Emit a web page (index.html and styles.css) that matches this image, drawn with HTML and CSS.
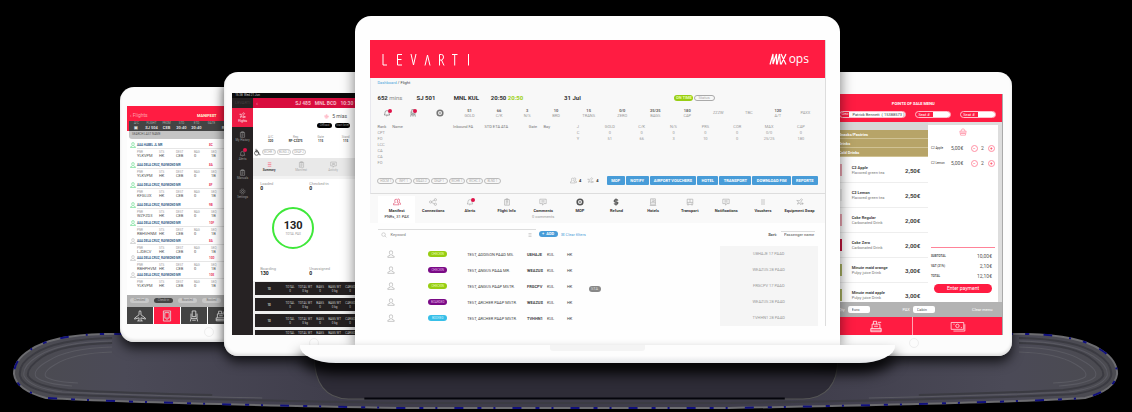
FILE: index.html
```html
<!DOCTYPE html>
<html lang="en">
<head>
<meta charset="utf-8">
<title>Levarti MAX ops</title>
<link rel="stylesheet" href="styles.css">
</head>
<body>
<svg class="sprite" aria-hidden="true">
  <symbol id="person" viewBox="0 0 10 10"><path d="M5 1a2 2 0 0 1 2 2.400Q6.800 5 6 5.500v1L9 8v1.200H1V8l3-1.500v-1Q3.200 5 3 3.400A2 2 0 0 1 5 1z"/></symbol>
  <symbol id="people" viewBox="0 0 10 10"><path d="M4 1.500a1.800 1.800 0 0 1 1.700 2.200Q5.500 5 5 5.500L7.500 7v1.500H.5V7L3 5.500Q2.300 5 2.200 3.700A1.800 1.800 0 0 1 4 1.500zM6 1.200q2-.5 2.200 1.500Q8.200 4.500 7.300 5L9.500 6.500v2"/></symbol>
  <symbol id="share" viewBox="0 0 10 10"><circle cx="2" cy="5" r="1.400"/><circle cx="8" cy="2.200" r="1.400"/><circle cx="8" cy="7.800" r="1.400"/><path d="M3.300 4.400L6.700 2.800M3.300 5.600l3.400 1.600"/></symbol>
  <symbol id="bell" viewBox="0 0 10 10"><path d="M1.500 7.500Q2.500 6.500 2.500 4.500a2.500 2.500 0 0 1 5 0q0 2 1 3zM4 8q1 2 2 0"/></symbol>
  <symbol id="clip" viewBox="0 0 10 10"><path d="M2 2h6v7H2zM3.700 1h2.600v1.700H3.700zM3.500 4.500h3M3.500 6h3M3.500 7.500h2"/></symbol>
  <symbol id="chat" viewBox="0 0 10 10"><path d="M1 1.500h8V7H6L4.500 9V7H1zM3 3.500h4M3 5h4"/></symbol>
  <symbol id="ring" viewBox="0 0 10 10"><circle cx="5" cy="5" r="3.500" stroke-width="2"/><path d="M3.500 5h3M5 3.500v3"/></symbol>
  <symbol id="dollar" viewBox="0 0 10 10"><path d="M7.500 3Q7 2 5 2T2.700 3.500 5 5t2.300 1.500T5 8 2.500 7M5 .5v9" stroke-width="1.400"/></symbol>
  <symbol id="bus" viewBox="0 0 10 10"><path d="M1.500 1.500h7v6.500h-7zM1.500 5.500h7M5 1.500v4M2.500 8v1.500M7.500 8v1.500M3 6.800h.5M6.500 6.800H7"/></symbol>
  <symbol id="hotel" viewBox="0 0 10 10"><path d="M2 1h6v7.500H2zM2 6h6M3.500 2.500h3v2h-3M1 9.500h8"/></symbol>
  <symbol id="list" viewBox="0 0 10 10"><path d="M2.500 2.500h5M2.500 5h5M2.500 7.500h5"/></symbol>
  <symbol id="plane" viewBox="0 0 10 10"><path d="M5 .5q.8 0 .8 1.500v2L9.500 6.800v.8L5.800 6.500v1.700l1.200.9H3l1.200-.9V6.500L.5 7.600v-.8L4.200 4V2Q4.200.5 5 .5z"/></symbol>
  <symbol id="swap" viewBox="0 0 10 10"><path d="M1 3l3 .5L7 1l1 1-2 3 .5 3L5.500 8 4 6 2.500 8 1.500 7 3.500 5.500zM7 7h2.500M8.200 5.800v2.500"/></symbol>
  <symbol id="search" viewBox="0 0 10 10"><circle cx="4.300" cy="4.300" r="3"/><path d="M6.500 6.500L9 9"/></symbol>
  <symbol id="gear" viewBox="0 0 10 10"><circle cx="5" cy="5" r="1.500"/><circle cx="5" cy="5" r="3.500" stroke-dasharray="2 .7"/></symbol>
  <symbol id="device" viewBox="0 0 10 10"><path d="M2 .8h6v8.400H2zM3.200 2.200h3.600v4.600H3.200zM4.500 8h1"/></symbol>
  <symbol id="seat" viewBox="0 0 10 10"><path d="M3.500.8h3v4.700h-3zM2.500 3v4h5V3M2.500 7L2 9.500M7.500 7L8 9.500M3.500 8.500h3"/></symbol>
  <symbol id="till" viewBox="0 0 10 10"><path d="M1 6.500h8V9H1zM2 6.500V3.200h6v3.300M3 3.200V1h2.500v2.200M6.500 1.800H9M3.500 4.800h3M1 7.800h8"/></symbol>
  <symbol id="cash" viewBox="0 0 14 10"><path d="M1 1.500h11v6H1zM3 9h10V3M3 3h1M9.500 6h1"/><circle cx="6.500" cy="4.500" r="1.500"/></symbol>
  <symbol id="wheel" viewBox="0 0 10 10"><circle cx="4.500" cy="6.500" r="2.600"/><path d="M3.800 1v4h3L8 8.500h1.500M3.800 3h2.500"/></symbol>
  <symbol id="basket" viewBox="0 0 10 10"><path d="M1 4h8L8 9H2zM2.500 4Q3 1 5 1t2.500 3M3.500 5.500v2M5 5.500v2M6.500 5.500v2M1.500 6.500h7"/></symbol>
</svg>

<main class="scene">
  <svg class="floor" viewBox="0 0 1106 78" preserveAspectRatio="none" aria-hidden="true">
    <defs>
      <linearGradient id="haze" x1="0" x2="1" y1="0" y2="0"><stop offset="0" stop-color="#4b4b50"/><stop offset=".1" stop-color="#4b4a57"/><stop offset=".3" stop-color="#3f3d4b"/><stop offset=".7" stop-color="#3f3d4b"/><stop offset=".9" stop-color="#4b4a57"/><stop offset="1" stop-color="#4b4b50"/></linearGradient>
      <path id="pool" d="M92 2Q40 3 18 18Q2 28 2 42Q4 58 34 66Q120 71 390 76H716Q990 71 1072 66Q1102 58 1104 42Q1104 28 1088 18Q1066 3 1014 2Z"/>
    </defs>
    <use href="#pool" fill="url(#haze)" stroke="#6c6c70" stroke-width="2"/>
    <use href="#pool" fill="none" stroke="#10107c" stroke-width="2" stroke-dasharray="4 12 2 17 9 14"/>
    <g fill="none" stroke="#3b3b42" stroke-width="2">
      <path d="M100 6Q44 7 22 22Q6 32 8 44Q12 57 44 62Q140 67 390 71H716Q966 67 1062 62Q1094 57 1098 44Q1100 32 1084 22Q1062 7 1006 6"/>
      <path d="M100 11Q50 12 30 25Q14 36 16 44Q22 54 56 58Q110 61 200 63M906 63Q996 61 1050 58Q1084 54 1090 44Q1092 36 1076 25Q1056 12 1006 11"/>
    </g>
    <g fill="none" stroke="#5a5a62" stroke-width="1">
      <path d="M100 9Q48 10 26 24Q10 34 12 44Q18 56 50 60Q110 63 250 66M856 66Q996 63 1056 60Q1088 56 1094 44Q1096 34 1080 24Q1058 10 1006 9"/>
      <path d="M100 15Q56 16 36 29Q20 38 24 45Q32 52 60 54M1006 15Q1050 16 1070 29Q1086 38 1082 45Q1074 52 1046 54"/>
      <path d="M100 20Q62 21 44 32Q30 40 34 45Q42 50 66 51M1006 20Q1044 21 1062 32Q1076 40 1072 45Q1064 50 1040 51"/>
    </g>
    <path d="M302 24H825Q826 66 790 67H336Q302 66 302 24Z" fill="#2e2c37"/>
    <path d="M352 66.500H772" stroke="#05050c" stroke-width="2"/>
  </svg>

  <section class="tablet manifest">
    <div class="screen">
      <header class="mf-bar"><a href="#">‹ Flights</a><b>MANIFEST</b></header>
      <dl class="mf-flight">
        <div><dt>A/C</dt><dd>▣</dd></div><div><dt>FLIGHT</dt><dd>SJ 504</dd></div><div><dt>FROM</dt><dd>CEB</dd></div><div><dt>STD</dt><dd>20:40</dd></div><div><dt>ETD</dt><dd>20:40</dd></div><div><dt>GATE</dt><dd></dd></div><div><dt>REG</dt><dd>RP-C</dd></div>
      </dl>
      <div class="mf-find">SEARCH LAST NAME</div>
      <ul class="mf-list">
        <li><svg class="ic go"><use href="#person"/></svg><b>AAA HABEL JL MR</b><em>8C</em><dl><div><dt>PNR</dt><dd>YLKVPM</dd></div><div><dt>STS</dt><dd>HK</dd></div><div><dt>DEST</dt><dd>CEB</dd></div><div><dt>BAG</dt><dd>0</dd></div><div><dt>SEQ</dt><dd>1B</dd></div></dl></li>
        <li><svg class="ic go"><use href="#person"/></svg><b>AAA DELA CRUZ, RAYMOND MR</b><em>8A</em><dl><div><dt>PNR</dt><dd>YLKVPM</dd></div><div><dt>STS</dt><dd>HK</dd></div><div><dt>DEST</dt><dd>CEB</dd></div><div><dt>BAG</dt><dd>0</dd></div><div><dt>SEQ</dt><dd>1B</dd></div></dl></li>
        <li><svg class="ic go"><use href="#person"/></svg><b>AAA DELA CRUZ, RAYMOND MR</b><em>8F</em><dl><div><dt>PNR</dt><dd>KFGLUX</dd></div><div><dt>STS</dt><dd>HK</dd></div><div><dt>DEST</dt><dd>CEB</dd></div><div><dt>BAG</dt><dd>0</dd></div><div><dt>SEQ</dt><dd>1B</dd></div></dl></li>
        <li><svg class="ic go"><use href="#person"/></svg><b>AAA DELA CRUZ, RAYMOND MR</b><em>9B</em><dl><div><dt>PNR</dt><dd>WZFZD3</dd></div><div><dt>STS</dt><dd>HK</dd></div><div><dt>DEST</dt><dd>CEB</dd></div><div><dt>BAG</dt><dd>0</dd></div><div><dt>SEQ</dt><dd>1B</dd></div></dl></li>
        <li><svg class="ic go"><use href="#person"/></svg><b>AAA DELA CRUZ, RAYMOND MR</b><em>10F</em><dl><div><dt>PNR</dt><dd>RBHVHNM</dd></div><div><dt>STS</dt><dd>HK</dd></div><div><dt>DEST</dt><dd>CEB</dd></div><div><dt>BAG</dt><dd>0</dd></div><div><dt>SEQ</dt><dd>1B</dd></div></dl></li>
        <li><svg class="ic"><use href="#person"/></svg><b>AAA DELA CRUZ, RAYMOND MR</b><em>8A</em><dl><div><dt>PNR</dt><dd>LJDECV</dd></div><div><dt>STS</dt><dd>HK</dd></div><div><dt>DEST</dt><dd>CEB</dd></div><div><dt>BAG</dt><dd>0</dd></div><div><dt>SEQ</dt><dd>1B</dd></div></dl></li>
        <li><svg class="ic"><use href="#person"/></svg><b>AAA DELA CRUZ, RAYMOND MR</b><em>10D</em><dl><div><dt>PNR</dt><dd>RBHPHVM</dd></div><div><dt>STS</dt><dd>HK</dd></div><div><dt>DEST</dt><dd>CEB</dd></div><div><dt>BAG</dt><dd>0</dd></div><div><dt>SEQ</dt><dd>1B</dd></div></dl></li>
        <li><svg class="ic"><use href="#person"/></svg><b>AAA DELA CRUZ, RAYMOND MR</b><em>10E</em><dl><div><dt>PNR</dt><dd>YLKVPM</dd></div><div><dt>STS</dt><dd>HK</dd></div><div><dt>DEST</dt><dd>CEB</dd></div><div><dt>BAG</dt><dd>0</dd></div><div><dt>SEQ</dt><dd>1B</dd></div></dl></li>
      </ul>
      <div class="mf-pills"><button>Checked</button><button class="on">Check-in</button><button>Boarded</button><button>Booked</button></div>
      <nav class="mf-nav"><button aria-label="Flights"><svg><use href="#plane"/></svg></button><button class="on" aria-label="Manifest"><svg><use href="#device"/></svg></button><button aria-label="Seats"><svg><use href="#seat"/></svg></button><button aria-label="Sales"><svg><use href="#till"/></svg></button></nav>
    </div>
    <i class="home"></i>
  </section>

  <section class="tablet flight">
    <div class="screen">
      <div class="status">15:38 &nbsp;Wed 21 Jun</div>
      <div class="fl-body">
        <nav class="fl-side">
          <span class="fl-logo">LEVARTI</span>
          <a href="#" class="on"><svg class="ic"><use href="#swap"/></svg>Flights</a>
          <a href="#"><svg class="ic"><use href="#clip"/></svg>My History</a>
          <a href="#" class="dot"><svg class="ic"><use href="#bell"/></svg>Alerts</a>
          <a href="#"><svg class="ic"><use href="#clip"/></svg>Manuals</a>
          <a href="#"><svg class="ic"><use href="#gear"/></svg>Settings</a>
        </nav>
        <div class="fl-main">
          <header class="fl-bar"><span>‹</span><b>SJ 485</b><b>MNL BCD</b><b>10:30 17:00</b></header>
          <div class="fl-time"><p><svg class="ic"><use href="#gear"/></svg>5 mias</p><p><button>Offload</button><button>Start brief</button></p></div>
          <dl class="fl-facts"><div><dt>A/C</dt><dd>320</dd></div><div><dt>Reg</dt><dd>RP-C3275</dd></div><div><dt>Gate</dt><dd>115</dd></div><div><dt>Stand</dt><dd>115</dd></div></dl>
          <div class="fl-tags"><svg class="ic"><use href="#wheel"/></svg><span>WCHR 1</span><span>BLND 2</span><span>DEAF 2</span></div>
          <div class="fl-tabs"><a href="#" class="on"><svg class="ic"><use href="#list"/></svg>Summary</a><a href="#"><svg class="ic"><use href="#clip"/></svg>Manifest</a><a href="#"><svg class="ic"><use href="#chat"/></svg>Activity</a></div>
          <div class="fl-cards">
            <div class="fl-count">
              <div class="pair"><p>Loaded<b>0</b></p><p>Checked-in<b>0</b></p></div>
              <div class="dial"><b>130</b><small>TOTAL PAX</small></div>
              <div class="pair"><p>Boarding<b>130</b></p><p>Unassigned<b>0</b></p></div>
            </div>
            <div class="fl-detail"><p>Flight details</p><ul><li>130 / 1</li><li>0 / 0 kg</li><li>0 / 0 kg</li><li>0 / 0 kg</li><li>0 / 0 kg</li><li>0 / 0 kg</li></ul><p>Guests</p><ul><li>3 <i>adults</i></li><li>0 <i>infants</i></li></ul></div>
          </div>
          <div class="fl-holds">
            <p><b>10</b><span>TOTAL<br>0</span><span>TOTAL WT<br>0 kg</span><span>BAGS<br>0</span><span>BAGS WT<br>0 kg</span><span>CARGO<br>0</span></p>
            <p><b>10</b><span>TOTAL<br>0</span><span>TOTAL WT<br>0 kg</span><span>BAGS<br>0</span><span>BAGS WT<br>0 kg</span><span>CARGO<br>0</span></p>
            <p><b>10</b><span>TOTAL<br>0</span><span>TOTAL WT<br>0 kg</span><span>BAGS<br>0</span><span>BAGS WT<br>0 kg</span><span>CARGO<br>0</span></p>
            <p class="cut"><b></b><span>TOTAL</span><span>TOTAL WT</span><span>BAGS</span><span>BAGS WT</span><span>CARGO</span></p>
          </div>
        </div>
      </div>
    </div>
    <i class="home"></i>
  </section>

  <section class="tablet sales">
    <div class="screen">
      <header class="ps-bar"><h2>POINTS OF SALE MENU</h2>
        <div class="ps-fields"><label class="wide">Crew<input value="Patrick Bennett  ( 15388573 )"></label><label>Seat #<input></label><label>Seat #<input></label></div></header>
      <div class="ps-body">
        <div class="ps-menu">
          <button class="cat">Snacks/Pastries</button><button class="cat">Drinks</button><button class="cat">Cold Drinks</button>
          <ul>
            <li><i></i><p><b>C2 Apple</b>Flavored green tea</p><strong>2,50€</strong></li>
            <li><i class="pale"></i><p><b>C2 Lemon</b>Flavored green tea</p><strong>2,50€</strong></li>
            <li><i></i><p><b>Coke Regular</b>Carbonated Drink</p><strong>2,00€</strong></li>
            <li><i class="red"></i><p><b>Coke Zero</b>Carbonated Drink</p><strong>2,00€</strong></li>
            <li><i class="olive"></i><p><b>Minute maid orange</b>Pulpy juice Drink</p><strong>3,00€</strong></li>
            <li><i class="olive"></i><p><b>Minute maid apple</b>Pulpy juice Drink</p><strong>3,00€</strong></li>
          </ul>
        </div>
        <aside class="ps-cart">
          <svg class="ic"><use href="#basket"/></svg>
          <p class="line"><small>C2 Apple</small><span>5,00€</span><button>−</button><span>2</span><button>+</button></p>
          <p class="line"><small>C2 Lemon</small><span>5,00€</span><button>−</button><span>2</span><button>+</button></p>
          <dl><div><dt>SUBTOTAL</dt><dd>10,00€</dd></div><div><dt>VAT (21%)</dt><dd>2,10€</dd></div><div><dt>TOTAL</dt><dd>12,10€</dd></div></dl>
          <button class="pay">Enter payment</button>
        </aside>
      </div>
      <div class="ps-tools"><label>Qty<input value="Euro"></label><label>PAX<input value="Cabin"></label><span>Clear menu</span></div>
      <nav class="ps-nav"><button aria-label="Register"><svg><use href="#till"/></svg></button><button aria-label="Payments"><svg><use href="#cash"/></svg></button></nav>
    </div>
    <i class="home"></i>
  </section>

  <section class="laptop">
    <div class="display">
      <header class="brand">
        <svg class="levarti" viewBox="0 0 88 12" role="img" aria-label="LEVARTI"><g fill="none" stroke="#fff"><path d="M1 0v11h4M20 .5h-4.500v10.500H20M15.500 5.500h4M29 0l2.500 11L34 0M43 11.500L45.500 1 48 11.500M57.500 11.500V.5h2q2 0 2 2.500t-2 3h-2M59.500 6l2.500 5.500M70 .5h5.500M72.700.5v11M86.500 0v11.500"/></g></svg>
        <div class="max"><svg viewBox="0 0 18 12" aria-label="MAX" role="img"><path d="M1 11.500L4 1v10L7.500 1v10.500M8 11.500L10.500 1l1 10.500M12 1l5 10.500M17 1l-5 10.500" fill="none" stroke="#fff" stroke-width="1.200"/></svg><span>ops</span></div>
      </header>
      <div class="top">
        <p class="crumb"><a href="#">Dashboard</a> / Flight</p>
        <div class="facts"><p>652 <i>mins</i></p><p>SJ 501</p><p>MNL KUL</p><p>20:50 <em>20:50</em></p><p>31 Jul</p><p class="states"><button>ON TIME</button><select aria-label="Status"><option>Status</option></select></p></div>
        <div class="stats">
          <span class="bell"><svg class="ic"><use href="#bell"/></svg></span><span class="bell"><svg class="ic"><use href="#seat"/></svg></span><span><svg class="ic"><use href="#ring"/></svg></span>
          <p><b>51</b>GOLD</p><p><b>66</b>C/K</p><p><b>3</b>N/S</p><p><b>10</b>BRD</p><p><b>15</b>TRANS</p><p><b>0/0</b>ZERO</p><p><b>25/25</b>BAGS</p><p><b>180</b>CAP</p><p>ZZZW</p><p>TBC</p><p><b>120</b>A/T</p><p>PAXX</p>
        </div>
        <div class="grids">
          <table class="crew"><tr><th>Rank</th><th>Name</th><th>Inbound FA</th><th>STD ETA ATA</th><th>Gate</th><th>Bay</th></tr><tr><td>CPT</td></tr><tr><td>FO</td></tr><tr><td>LCC</td></tr><tr><td>CA</td></tr><tr><td>CA</td></tr><tr><td>FO</td></tr></table>
          <table class="load"><tr><th>J</th><th>GOLD</th><th>C/K</th><th>N/S</th><th>PRS</th><th>COR</th><th>MAX</th><th>CAP</th></tr><tr><td>C</td><td>0</td><td>0</td><td>0</td><td>0</td><td>0</td><td>0/0</td><td>0</td></tr><tr><td>Y</td><td>51</td><td>66</td><td>3</td><td>10</td><td>0</td><td>25/25</td><td>180</td></tr></table>
        </div>
        <div class="actions">
          <div class="chips"><span>HDCM 1</span><span>INFT 1</span><span>MAAS 2</span><span>DEAF 1</span><span>WCHR 1</span><span>WCHC 3</span><span>BLND 1</span></div>
          <div class="cnt"><span><svg class="ic"><use href="#people"/></svg>4</span><span><svg class="ic"><use href="#swap"/></svg>4</span></div>
          <div class="blue"><button>MOP</button><button>NOTIFY</button><button>AIRPORT VOUCHERS</button><button>HOTEL</button><button>TRANSPORT</button><button>DOWNLOAD FIM</button><button>REPORTS</button></div>
        </div>
      </div>
      <nav class="tabs">
        <a href="#" class="on"><svg class="ic"><use href="#people"/></svg>Manifest<small>PNRs, 31 PAX</small></a><a href="#"><svg class="ic"><use href="#share"/></svg>Connections</a><a href="#" class="bell"><svg class="ic"><use href="#bell"/></svg>Alerts</a><a href="#"><svg class="ic"><use href="#clip"/></svg>Flight Info</a><a href="#"><svg class="ic"><use href="#chat"/></svg>Comments<small class="dim">0 comments</small></a><a href="#"><svg class="ic dark"><use href="#ring"/></svg>MOP</a><a href="#"><svg class="ic dark"><use href="#dollar"/></svg>Refund</a><a href="#"><svg class="ic"><use href="#hotel"/></svg>Hotels</a><a href="#"><svg class="ic"><use href="#bus"/></svg>Transport</a><a href="#"><svg class="ic"><use href="#chat"/></svg>Notifications</a><a href="#"><svg class="ic"><use href="#list"/></svg>Vouchers</a><a href="#"><svg class="ic"><use href="#swap"/></svg>Equipment Swap</a>
      </nav>
      <div class="filter">
        <label class="find"><svg class="ic"><use href="#search"/></svg><input placeholder="Keyword" aria-label="Keyword"><svg class="ic"><use href="#list"/></svg></label>
        <button>+ &nbsp;ADD</button><a href="#">☒ Clear filters</a>
        <label class="sort">Sort: <select><option>Passenger name</option></select></label>
      </div>
      <div class="rows">
        <table class="pax">
          <tr><td><svg class="ic"><use href="#person"/></svg></td><td><mark>CHECKIN</mark></td><td>TEST, ADDISON PAAD MS.</td><td><b>U8HAJE</b></td><td>KUL</td><td>HK</td></tr>
          <tr><td><svg class="ic"><use href="#person"/></svg></td><td><mark class="purple">CHECKIN</mark></td><td>TEST, ANGUS PAAA MR.</td><td><b>WEAZUS</b></td><td>KUL</td><td>HK</td></tr>
          <tr><td><svg class="ic"><use href="#person"/></svg></td><td><mark>CHECKIN</mark></td><td>TEST, ANGUS PAAP MSTR.</td><td><b>FRGCPV</b></td><td>KUL</td><td>HK</td></tr>
          <tr><td><svg class="ic"><use href="#person"/></svg></td><td><mark class="purple">BOARDED</mark></td><td>TEST, ARCHER PAAP MSTR.</td><td><b>WEAZUS</b></td><td>KUL</td><td>HK</td></tr>
          <tr><td><svg class="ic"><use href="#person"/></svg></td><td><mark class="cyan">BOOKED</mark></td><td>TEST, ARCHER PAAP MSTR.</td><td><b>TVHHN1</b></td><td>KUL</td><td>HK</td></tr>
        </table>
        <span class="tag">STA</span>
        <ul class="codes"><li>U8HAJE 17 PAAD</li><li>WEAZUS 28 PAAD</li><li>FRGCPV 17 PAAD</li><li>WEAZUS 28 PAAD</li><li>TVHHN1 28 PAAD</li></ul>
      </div>
    </div>
  </section>
  <div class="base"><i></i></div>
</main>
</body>
</html>
```

FILE: styles.css
```css
* { box-sizing: border-box; margin: 0; padding: 0; }
body { background: #000; color: #555; font: 4px/5px Roboto, sans-serif; }
ul { list-style: none; }
i, em { font-style: normal; }
a { color: inherit; text-decoration: none; }
button, input, select { font: inherit; color: inherit; border: 0; background: none; appearance: none; min-width: 0; }
button { white-space: nowrap; }
table { border-collapse: collapse; table-layout: fixed; }
svg { fill: none; stroke: currentColor; }
.sprite { display: none; }
.ic { width: 8px; height: 8px; flex: none; color: #aaa; stroke-width: .8; }

.scene { position: relative; min-height: 412px; overflow: hidden; }
.floor { position: absolute; left: 1.1%; width: 97.8%; top: 332px; height: 78px; }

/* devices on the stage */
.tablet { position: absolute; background: #fcfcfc; border-radius: 14px; box-shadow: 0 6px 12px #000b, inset 0 -2px 3px #ddd; display: flex; flex-direction: column; }
.tablet .screen { overflow: hidden; background: #fff; }
.home { width: 10px; height: 10px; border-radius: 50%; border: 1px solid #eee; margin: 3px auto 0; }
.manifest { left: 10.6%; width: 15.7%; top: 87px; padding: 19px 6px 5px 7px; }
.flight { left: 19.8%; width: 16.3%; top: 72px; padding: 21px 12px 8px 8px; }
.sales { left: 71.7%; width: 17.7%; top: 72px; padding: 22px 9px 8px 27px; }
.laptop { position: absolute; left: 31.4%; width: 42.8%; top: 16px; background: #fefefe; border-radius: 16px 16px 0 0; padding: 24px 14px 21px 15px; box-shadow: 0 0 14px #0008; }
.base { position: absolute; left: 26.5%; width: 52.6%; top: 345px; height: 18px; border-radius: 0 0 36px 36px / 0 0 17px 17px; background: linear-gradient(#fdfdfd 60%, #e3e5e8); box-shadow: 0 10px 14px #000; }
.base i { display: block; width: 16%; height: 6px; margin: 0 auto; background: #f4f4f4; border-radius: 0 0 3px 3px; }

/* manifest tablet */
.mf-bar { height: 15px; background: #ff1c42; color: #ffd; display: flex; align-items: center; padding: 3px 0 0 3px; font-size: 5px; }
.mf-bar a { color: #ffa3ad; flex: 0 0 67px; }
.mf-bar b { font-size: 4px; }
.mf-flight { display: grid; grid-template-columns: repeat(7, 15px); height: 10px; background: #444; color: #ddd; border-left: 2px solid #ff1c42; text-align: center; }
.mf-flight dt { color: #aaa; font-size: 3px; line-height: 4px; }
.mf-flight dd { font-weight: bold; }
.mf-find { background: #c4c4c4; height: 8px; margin-left: 2px; padding: 1px 3px; font-size: 3px; border-radius: 0 0 0 3px; }
.mf-list { height: 156px; padding-top: 3px; }
.mf-list li { display: grid; grid-template-columns: 10px 72px 1fr; align-content: start; align-items: center; height: 18px; font-size: 4px; }
.mf-list li:nth-child(-n+3) { height: 20px; }
.mf-list li:nth-child(n+6) { height: 17px; }
.mf-list .ic { width: 6px; height: 6px; margin-left: 3px; }
.mf-list .go { color: #35d067; }
.mf-list b { color: #356088; white-space: nowrap; font-size: 3px; }
.mf-list em { color: #e8345c; font-weight: bold; font-size: 3px; }
.mf-list dl { grid-column: 2 / 4; display: grid; grid-template-columns: 22px 17px 18px 17px 1fr; border-top: 1px solid #e6e6e6; padding-top: 1px; }
.mf-list dt { font-size: 3px; line-height: 4px; color: #999; }
.mf-list dd { line-height: 4px; }
.mf-pills { display: flex; gap: 5px; background: #b1b1b1; height: 12px; padding: 3px; }
.mf-pills button { flex: 0 0 19px; height: 5px; line-height: 5px; font-size: 3px; border-radius: 3px; background: #c8c8c8; color: #777; }
.mf-pills .on { background: #444; color: #aaa; }
.mf-nav { display: flex; gap: 1px; }
.mf-nav button { flex: 0 0 26px; height: 17px; background: #434343; color: #ddd; }
.mf-nav .on { background: #ff1c42; }
.mf-nav svg { width: 12px; height: 12px; display: block; margin: auto; stroke-width: .7; }

/* flight tablet */
.flight .screen { white-space: nowrap; height: 242px; }
.status { background: #0b0b0b; color: #ccc; height: 5px; line-height: 5px; font-size: 3px; padding-left: 3px; }
.fl-body { display: flex; }
.fl-side { flex: 0 0 21px; background: #262223; height: 237px; color: #999; text-align: center; }
.fl-logo { display: block; height: 10px; line-height: 10px; color: #443e40; }
.fl-side a { display: flex; flex-direction: column; align-items: center; justify-content: center; height: 19px; font-size: 3px; line-height: 4px; position: relative; }
.fl-side .ic { color: inherit; width: 7px; height: 7px; }
.fl-side .on { background: #ee1c45; color: #fff; }
.dot::after, .bell::after { content: ""; position: absolute; width: 4px; height: 4px; border-radius: 50%; background: #e01248; top: 2px; left: 52%; }
.fl-main { flex: 1; min-width: 0; background: #f3f3f3; }
.fl-bar { display: flex; gap: 4px; background: #d90d3f; height: 10px; line-height: 10px; font-size: 5px; color: #f5b8c5; padding-left: 3px; overflow: hidden; }
.fl-bar span { flex: 0 0 35px; }
.fl-time { background: #fff; height: 24px; padding: 4px 0 0 64px; font-size: 5px; }
.fl-time p { display: flex; align-items: center; gap: 3px; height: 9px; }
.fl-time p:first-child { padding-left: 7px; }
.fl-time .ic { width: 5px; height: 5px; color: #ff4f6e; }
.fl-time button { background: #000; color: #999; flex: 0 0 15px; height: 5px; line-height: 5px; font-size: 3px; border-radius: 3px; }
.fl-facts { display: grid; grid-template-columns: repeat(5, 25px); background: #fff; text-align: center; height: 14px; padding: 3px 0 0 5px; }
.fl-facts dt { font-size: 3px; line-height: 4px; color: #999; }
.fl-facts dd { font-weight: bold; color: #333; font-size: 3px; }
.fl-tags { display: flex; align-items: center; height: 12px; background: #fff; }
.fl-tags .ic { color: #333; margin-right: 1px; }
.fl-tags span { flex: 0 0 14px; margin-right: 1px; border: 1px solid #ccc; border-radius: 3px; font-size: 3px; line-height: 4px; text-align: center; color: #aaa; }
.fl-tabs { display: grid; grid-template-columns: repeat(3, 32px); height: 18px; background: #e9e9e9; color: #aaa; text-align: center; }
.fl-tabs a { display: flex; flex-direction: column; align-items: center; justify-content: center; font-size: 3px; }
.fl-tabs .ic { color: inherit; width: 7px; height: 7px; }
.fl-tabs .on { font-weight: bold; color: #444; }
.fl-tabs .on .ic { color: #ff4f6e; }
.fl-cards { display: flex; gap: 4px; height: 105px; padding-top: 3px; }
.fl-count { flex: 0 0 77px; background: #fff; padding: 2px 0 0 7px; }
.pair { display: flex; color: #999; }
.pair p { flex: 0 0 49px; }
.pair b { display: block; font-size: 5px; color: #222; }
.dial { width: 42px; height: 42px; border: 2px solid #3fe83a; border-radius: 50%; margin: 16px 0 17px 12px; display: flex; flex-direction: column; align-items: center; justify-content: center; line-height: 5px; color: #999; }
.dial b { font: bold 11px/13px Roboto, sans-serif; color: #222; }
.dial small { font-size: 3px; }
.fl-detail { background: #fff; padding: 4px; color: #999; flex: 1; min-width: 0; overflow: hidden; }
.fl-detail ul { padding: 3px 0 9px; }
.fl-detail li { font: bold 6px/7px Roboto, sans-serif; color: #333; }
.fl-detail li i { font-size: 4px; color: #aaa; }
.fl-holds { background: #eee; padding: 1px 0 0 2px; display: grid; gap: 3px; }
.fl-holds p { display: grid; grid-template-columns: 28px 14px 16px 14px 15px 16px; align-items: center; text-align: center; height: 13px; background: #242021; color: #ccc; font-size: 3px; line-height: 4px; overflow: hidden; }
.fl-holds .cut { height: 5px; }

/* point of sale tablet */
.sales .screen { border-right: 1px solid #aaa; }
.sales .home { margin-left: 70px; }
.ps-bar { background: #ff1c42; color: #fff; height: 28px; padding-top: 7px; }
.ps-bar h2 { font-size: 4px; line-height: 6px; text-align: center; padding-right: 14px; }
.ps-fields { display: grid; grid-template-columns: 70fr 37fr 37fr; gap: 9px; padding: 4px 6px 0 0; font-size: 4px; }
.ps-fields label { display: flex; align-items: center; height: 7px; border: 1px solid #ffc1cb; border-radius: 4px; padding-left: 2px; overflow: hidden; }
.ps-fields input { flex: 1; background: #fff; height: 7px; margin-left: 3px; padding-left: 3px; color: #444; }
.ps-fields .wide { font-size: 3px; }
.ps-fields .wide input { font-size: 4px; margin-left: 1px; }
.ps-body { display: grid; grid-template-columns: 92fr 70fr; padding-right: 4px; background: #ddd; height: 180px; overflow: hidden; }
.ps-menu { background: #fff; border-top: 8px solid #d7d7d7; }
.cat { display: block; width: 100%; height: 9px; background: #b7a468; border-bottom: 1px solid #d0c294; color: #fff; text-align: left; font-size: 4px; font-weight: bold; }
.ps-menu ul { padding-top: 1px; }
.ps-menu li { display: grid; grid-template-columns: 13px 1fr 23px; align-items: center; height: 25px; border-bottom: 1px solid #eee; color: #777; }
.ps-menu li i { width: 3px; height: 12px; background: #eba5b0; }
.ps-menu li .red { background: #c3163c; }
.ps-menu li .pale { background: #eee; }
.ps-menu li .olive { background: #a9b263; }
.ps-menu b { display: block; color: #444; font-size: 4px; line-height: 5px; }
.ps-menu strong { font-size: 6px; color: #444; }
.ps-cart { background: #fff; margin-top: 3px; text-align: center; padding: 3px 3px 0; font-size: 5px; }
.ps-cart .ic { color: #ff7f97; display: block; margin: 0 auto 5px; }
.line { display: grid; grid-template-columns: 20px 20px 10px 7px 7px; align-items: center; height: 15px; text-align: left; }
.line small { font-size: 3px; color: #333; }
.line button { width: 7px; height: 7px; line-height: 5px; border: 1px solid #ff8fa3; border-radius: 50%; color: #ff1c42; }
.ps-cart dl { border-top: 1px solid #ff8398; margin-top: 76px; padding-top: 3px; }
.ps-cart dl div { display: flex; justify-content: space-between; line-height: 10px; padding-right: 3px; }
.ps-cart dt { font-size: 3px; font-weight: bold; }
.pay { width: 90%; height: 9px; border-radius: 5px; background: #ff1c42; color: #fff; font-size: 5px; margin-top: 3px; }
.ps-tools { display: grid; grid-template-columns: 64fr 70fr 30fr; align-items: center; background: #b3b3b3; height: 15px; color: #fff; }
.ps-tools label { display: flex; align-items: center; }
.ps-tools input { width: 22px; height: 7px; border-radius: 2px; background: #fff; color: #555; margin-left: 3px; padding-left: 4px; }
.ps-nav { display: grid; grid-template-columns: 75fr 90fr; gap: 1px; background: #ffa5b3; }
.ps-nav button { background: #ff1c42; color: #fff; height: 18px; }
.ps-nav svg { width: 16px; height: 13px; display: block; margin: auto; stroke-width: .6; }

/* laptop */
.display { background: #fefefe; border-right: 1px solid #ddd; }
.brand { display: flex; align-items: center; justify-content: space-between; height: 38px; background: #ff1c42; padding: 2px 16px 0 12px; }
.levarti { width: 88px; height: 12px; }
.max { display: flex; align-items: center; gap: 2px; color: #fff; font: 12px/14px "Open Sans", sans-serif; margin-top: -3px; }
.max svg { width: 18px; height: 12px; }
.top { background: #f8f8f8; border-bottom: 1px solid #ddd; border-left: 1px solid #e8e8ee; height: 116px; }
.crumb { padding: 2px 6px 0; height: 15px; color: #444; }
.crumb a { color: #4aa5dc; }
.facts { display: grid; grid-template-columns: 39fr 37fr 37fr 73fr 110fr 150fr; padding-left: 6px; font: bold 6px/10px Roboto, sans-serif; color: #333; align-items: center; white-space: nowrap; }
.facts i { font-weight: normal; color: #888; }
.facts em { color: #9ad016; }
.states { display: flex; gap: 1px; font-size: 4px; }
.states button { background: #97cd13; color: #eaffb0; border-radius: 3px; width: 19px; height: 6px; line-height: 6px; }
.states select { border: 1px solid #aaa; border-radius: 3px; width: 21px; height: 6px; line-height: 4px; color: #aaa; padding-left: 3px; font-weight: normal; }
.stats { display: grid; grid-template-columns: 26fr 25fr 29fr 30fr 29fr 27fr 31fr 34fr 33fr 33fr 31fr 31fr 30fr 28fr 27fr; padding: 1px 6px 0 3px; height: 18px; text-align: center; align-items: center; color: #999; }
.stats > * { position: relative; min-width: 0; }
.stats b { display: block; color: #666; }
.stats .ic { color: #777; display: block; margin: auto; }
.stats .bell::after { top: 0; }
.grids { display: flex; height: 55px; padding: 3px 8px 0 6px; color: #999; align-items: flex-start; }
.grids th { font-weight: normal; }
.crew { width: 42%; text-align: left; white-space: nowrap; }
.crew th:nth-child(1) { width: 8%; }
.crew th:nth-child(2) { width: 33%; }
.crew th:nth-child(3) { width: 17%; }
.crew th:nth-child(4) { width: 24%; }
.crew th:nth-child(5) { width: 8%; }
.crew th { color: #777; }
.crew td, .crew th, .load td, .load th { line-height: 6px; }
.load { width: 58%; text-align: center; }
.actions { display: flex; align-items: center; padding: 0 7px 0 6px; }
.chips { display: flex; gap: 1px; font-size: 4px; color: #aaa; flex: 0 0 28%; }
.chips span { flex: 1; border: 1px solid #bbb; border-radius: 3px; line-height: 4px; height: 6px; text-align: center; font-size: 3px; white-space: nowrap; }
.cnt { display: flex; flex: 1; justify-content: flex-end; gap: 6px; padding-right: 8px; }
.cnt span { display: flex; align-items: center; gap: 2px; font-weight: bold; color: #222; }
.cnt .ic { width: 7px; height: 7px; }
.blue { display: grid; grid-template-columns: 18fr 23fr 46fr 21fr 32fr 38fr 26fr; gap: 1px; flex: 0 0 48%; }
.blue button { background: #489cd8; color: #fff; height: 9px; line-height: 9px; font-weight: bold; border-radius: 1px; }
.tabs { display: grid; grid-template-columns: repeat(12, minmax(0, 1fr)); padding: 2px 7px 0 8px; height: 29px; background: #f9f9f9; color: #333; font-weight: bold; }
.tabs a { display: flex; flex-direction: column; align-items: center; padding-top: 2px; position: relative; white-space: nowrap; font-size: 4px; gap: 2px; }
.tabs .on { background: #fff; }
.tabs .on .ic { color: #e0486a; }
.tabs small { font-size: 4px; line-height: 4px; font-weight: normal; }
.tabs .dim { color: #999; }
.tabs .dark { color: #555; }
.filter { display: flex; align-items: center; gap: 3px; padding: 4px 10px 0 8px; height: 18px; }
.find { display: flex; align-items: center; flex: 0 0 36%; border-top: 1px solid #ddd; height: 10px; padding: 0 3px; }
.find input { flex: 1; font-size: 4px; padding-left: 3px; }
.find .ic { width: 6px; height: 6px; }
.filter button { width: 19px; height: 6px; line-height: 6px; background: #489cd8; color: #fff; border-radius: 3px; font-weight: bold; }
.filter a { color: #489cd8; }
.sort { margin-left: auto; font-weight: bold; }
.sort select { width: 34px; border-top: 1px solid #ddd; color: #888; padding-left: 3px; margin-left: 3px; }
.rows { display: grid; grid-template-columns: 340fr 98fr; padding: 5px 7px 0 8px; position: relative; }
.pax { width: 65%; white-space: nowrap; color: #444; }
.pax td { height: 16px; vertical-align: middle; }
.pax td:nth-child(1) { width: 22%; padding-left: 9px; }
.pax td:nth-child(2) { width: 18%; }
.pax td:nth-child(3) { width: 27%; }
.pax td:nth-child(4) { width: 9%; }
.pax td:nth-child(5) { width: 9%; }
.pax .ic { display: block; }
.pax mark { display: block; width: 19px; margin-left: 1px; text-align: center; background: #97cd13; color: #e9ffb5; height: 6px; line-height: 6px; border-radius: 3px; font-size: 3px; }
.pax .purple { background: #7a0b86; color: #e3b2e8; }
.pax .cyan { background: #37bfe8; color: #c9f2ff; }
.tag { position: absolute; left: 48%; top: 45px; width: 12px; height: 6px; line-height: 6px; border-radius: 3px; background: #888; color: #ddd; text-align: center; }
.codes { background: #f5f5f5; color: #999; text-align: center; }
.codes li { line-height: 16px; }
```
